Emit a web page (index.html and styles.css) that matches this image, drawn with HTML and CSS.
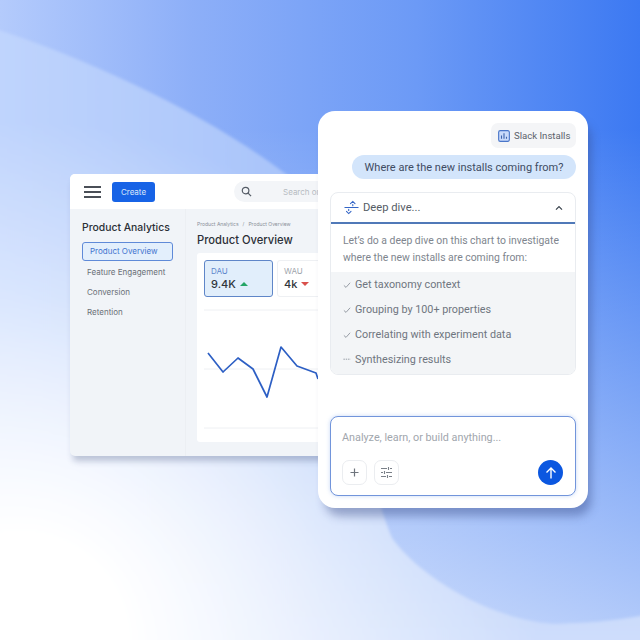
FILE: index.html
```html
<!DOCTYPE html>
<html lang="en">
<head>
    <meta charset="UTF-8">
    <title>Product Analytics</title>
    <link rel="stylesheet" href="styles.css">
</head>
<body>
<div class="stage">
    <svg class="backdrop" width="640" height="640" viewBox="0 0 640 640">
        <defs>
            <linearGradient id="sky" x1="0" y1="0" x2="1" y2="0">
                <stop offset="0" stop-color="#b4cbfc"/>
                <stop offset="0.3" stop-color="#8dafF8"/>
                <stop offset="0.65" stop-color="#6c9af6"/>
                <stop offset="1" stop-color="#3c79f2"/>
            </linearGradient>
            <linearGradient id="fade" x1="0" y1="0" x2="0" y2="1">
                <stop offset="0.2" stop-color="#ffffff" stop-opacity="0"/>
                <stop offset="1" stop-color="#ffffff" stop-opacity="0.62"/>
            </linearGradient>
            <linearGradient id="wave" gradientUnits="userSpaceOnUse" x1="0" y1="0" x2="320" y2="0">
                <stop offset="0" stop-color="#bfd4fd"/>
                <stop offset="1" stop-color="#a6c2f9"/>
            </linearGradient>
            <linearGradient id="lift" gradientUnits="userSpaceOnUse" x1="0" y1="300" x2="0" y2="640">
                <stop offset="0" stop-color="#ffffff" stop-opacity="0"/>
                <stop offset="1" stop-color="#ffffff" stop-opacity="0.45"/>
            </linearGradient>
            <radialGradient id="glow" gradientUnits="userSpaceOnUse" cx="20" cy="640" r="520">
                <stop offset="0.2" stop-color="#ffffff"/>
                <stop offset="1" stop-color="#ffffff" stop-opacity="0"/>
            </radialGradient>
            <filter id="soft"><feGaussianBlur stdDeviation="1.5"/></filter>
            <path id="lightpart" d="M-20 24C90 58 220 120 300 185C360 250 350 440 392 538C430 590 520 630 571 623C600 622 620 620 660 612V660H-20Z"/>
        </defs>
        <rect width="640" height="640" fill="url(#sky)"/>
        <rect width="640" height="640" fill="url(#fade)"/>
        <g filter="url(#soft)">
            <use href="#lightpart" fill="url(#wave)"/>
            <use href="#lightpart" fill="url(#lift)"/>
            <use href="#lightpart" fill="url(#glow)"/>
        </g>
    </svg>

    <!-- dashboard window, goes behind the chat panel -->
    <section class="dash">
        <header class="dash-top">
            <span class="burger"><i></i><i></i><i></i></span>
            <button class="create-btn">Create</button>
            <div class="search">
                <svg width="11" height="11" viewBox="0 0 12 12" fill="none" stroke="#555c66" stroke-width="1.3"><circle cx="5" cy="5" r="3.6"/><path d="M7.7 7.7L11 11"/></svg>
                <span>Search or</span>
            </div>
        </header>
        <div class="dash-body">
            <aside class="side">
                <h3>Product Analytics</h3>
                <a class="side-link active">Product Overview</a>
                <a class="side-link">Feature Engagement</a>
                <a class="side-link">Conversion</a>
                <a class="side-link">Retention</a>
            </aside>
            <main class="content">
                <div class="crumbs"><span>Product Analytics</span><span>/</span><span>Product Overview</span></div>
                <h2>Product Overview</h2>
                <div class="chart-card">
                    <div class="metrics">
                        <div class="metric selected">
                            <label>DAU</label>
                            <div class="val">9.4K <b class="tri up"></b></div>
                        </div>
                        <div class="metric">
                            <label>WAU</label>
                            <div class="val">4k <b class="tri down"></b></div>
                        </div>
                    </div>
                    <svg class="chart" width="150" height="132" viewBox="0 0 150 132" fill="none">
                        <path d="M0 2H150M0 61H150M0 120H150" stroke="#eef0f3" stroke-width="1"/>
                        <path d="M4 45L19 64L34 50L49 61L63 89L77 39L93 58L112 65L114 71" stroke="#2d5fc4" stroke-width="1.7" stroke-linejoin="round"/>
                    </svg>
                </div>
            </main>
        </div>
    </section>

    <!-- chat panel -->
    <section class="chat">
        <div class="chat-scroll">
            <div class="chip">
                <svg width="12" height="12" viewBox="0 0 13 13" fill="none"><rect x="0.7" y="0.7" width="11.6" height="11.6" rx="1.8" fill="#c9dafa" stroke="#4a76c9" stroke-width="1.2"/><path d="M3.8 9.4V6M6.5 9.4V3.6M9.2 9.4V7.4" stroke="#3d64ad" stroke-width="1.2"/></svg>
                <span>Slack Installs</span>
            </div>
            <div class="bubble">Where are the new installs coming from?</div>
            <div class="dive">
                <div class="dive-head">
                    <svg width="15" height="15" viewBox="0 0 15 15" fill="none" stroke="#3566c6" stroke-width="1.1"><path d="M0.5 7.5H14.5"/><path d="M6.5 3.6L8.8 1.4L11 3.6M8.8 4.5V5.8M2.5 11.4L4.7 13.6L7 11.4M4.7 9.2V10.5" stroke-linecap="round"/></svg>
                    <span class="dive-title">Deep dive...</span>
                    <svg class="caret" width="8" height="6" viewBox="0 0 8 6" fill="none" stroke="#3d4650" stroke-width="1.3"><path d="M1 4.6L4 1.6L7 4.6"/></svg>
                </div>
                <p class="dive-text">Let’s do a deep dive on this chart to investigate<br>where the new installs are coming from:</p>
                <ul class="steps">
                    <li><svg width="8" height="8" viewBox="0 0 9 9" fill="none" stroke="#8b929b" stroke-width="1"><path d="M1 5L3.4 7.2L8 2"/></svg>Get taxonomy context</li>
                    <li><svg width="8" height="8" viewBox="0 0 9 9" fill="none" stroke="#8b929b" stroke-width="1"><path d="M1 5L3.4 7.2L8 2"/></svg>Grouping by 100+ properties</li>
                    <li><svg width="8" height="8" viewBox="0 0 9 9" fill="none" stroke="#8b929b" stroke-width="1"><path d="M1 5L3.4 7.2L8 2"/></svg>Correlating with experiment data</li>
                    <li><svg width="8" height="8" viewBox="0 0 9 9" fill="none" stroke="#8b929b" stroke-width="1" stroke-dasharray="1.6 1"><path d="M0.5 3.6H8.5"/></svg>Synthesizing results</li>
                </ul>
            </div>
        </div>
        <div class="composer">
            <div class="placeholder">Analyze, learn, or build anything...</div>
            <div class="composer-row">
                <button class="tool-btn"><svg width="11" height="11" viewBox="0 0 11 11" fill="none" stroke="#6f757d" stroke-width="1.2"><path d="M5.5 1.5V9.5M1.5 5.5H9.5"/></svg></button>
                <button class="tool-btn"><svg width="13" height="13" viewBox="0 0 13 13" fill="none" stroke="#7a8088" stroke-width="1.1"><path d="M1 2.5H7M10 2.5H12M1 6.5H3M6 6.5H12M1 10.5H6M9 10.5H12M8.5 1V4M4.5 5V8M7.5 9V12"/></svg></button>
                <button class="send-btn"><svg width="14" height="14" viewBox="0 0 14 14" fill="none" stroke="#fff" stroke-width="1.4"><path d="M7 12.5V2M2.5 6.5L7 2L11.5 6.5"/></svg></button>
            </div>
        </div>
    </section>
</div>
</body>
</html>
```

FILE: styles.css
```css
* {
    box-sizing: border-box;
}
body {
    margin: 0;
    font-family: Inter, "Liberation Sans", sans-serif;
}
.stage {
    position: relative;
    width: 640px;
    height: 640px;
    overflow: hidden;
}
.backdrop {
    position: absolute;
    left: 0;
    top: 0;
}

/* dashboard window */
.dash {
    position: absolute;
    left: 70px;
    top: 174px;
    width: 290px;
    height: 282px;
    display: flex;
    flex-direction: column;
    background: #f1f4f8;
    border-radius: 5px;
    box-shadow: 2px 6px 6px -1px rgba(60, 75, 120, 0.3);
    overflow: hidden;
}
.dash-top {
    height: 35px;
    flex-shrink: 0;
    display: flex;
    align-items: center;
    background: #fff;
    padding-left: 14px;
}
.burger {
    display: flex;
    flex-direction: column;
    gap: 3px;
    width: 17px;
}
.burger i {
    display: block;
    height: 2px;
    background: #4a4f57;
}
.create-btn {
    margin-left: 11px;
    width: 43px;
    height: 20px;
    padding: 0;
    border: none;
    border-radius: 3px;
    background: #1763e6;
    color: #dbe7fb;
    font: 8px Inter, sans-serif;
}
.search {
    margin-left: 79px;
    width: 110px;
    height: 21px;
    display: flex;
    align-items: center;
    gap: 31px;
    padding-left: 7px;
    border-radius: 11px;
    background: #f3f5f8;
    color: #b6bbc2;
    font-size: 8px;
    white-space: nowrap;
}
.dash-body {
    flex: 1;
    display: flex;
}
.side {
    width: 116px;
    padding: 12px 12px 0 12px;
    border-right: 1px solid #eceff3;
}
.side h3 {
    margin: 0 0 8px;
    font-size: 10.4px;
    font-weight: 500;
    color: #2b2f36;
    white-space: nowrap;
}
.side-link {
    display: block;
    height: 18px;
    margin-bottom: 2px;
    padding-left: 5px;
    line-height: 18px;
    font-size: 8px;
    color: #6a7077;
    white-space: nowrap;
}
.side-link.active {
    height: 19px;
    padding-left: 7px;
    margin-bottom: 2px;
    border: 1px solid #5f8ad8;
    border-radius: 3px;
    background: #e3effc;
    color: #3f73cf;
    line-height: 17px;
}
.content {
    flex: 1;
    padding: 12px 0 15px 11px;
    overflow: hidden;
}
.crumbs {
    display: flex;
    gap: 4px;
    font-size: 5px;
    color: #8a9098;
    white-space: nowrap;
}
.content h2 {
    margin: 6px 0 6px;
    font-size: 11.2px;
    font-weight: 500;
    color: #2b2f36;
    white-space: nowrap;
}
.chart-card {
    height: 189px;
    padding: 7px 0 0 7px;
    background: #fff;
    border-radius: 3px 0 0 3px;
}
.metrics {
    display: flex;
    gap: 4px;
}
.metric {
    width: 69px;
    height: 37px;
    padding: 5px 6px;
    border: 1px solid #eef0f3;
    border-radius: 3px;
    background: #fff;
}
.metric.selected {
    border-color: #5f86c8;
    background: #e1eefb;
}
.metric label {
    display: block;
    font-size: 8px;
    line-height: 10px;
    color: #a0a5ac;
}
.metric.selected label {
    color: #5d86cc;
}
.val {
    display: flex;
    align-items: center;
    gap: 4px;
    font-size: 11px;
    font-weight: 500;
    line-height: 16px;
    color: #30353c;
}
.tri {
    width: 0;
    height: 0;
    border-left: 4px solid transparent;
    border-right: 4px solid transparent;
}
.tri.up {
    border-bottom: 4px solid #25a566;
}
.tri.down {
    border-top: 4px solid #d9504c;
}
.chart {
    display: block;
    margin-top: 11px;
}

/* chat panel */
.chat {
    position: absolute;
    left: 318px;
    top: 111px;
    width: 270px;
    height: 397px;
    display: flex;
    flex-direction: column;
    justify-content: space-between;
    padding: 12px;
    background: #fff;
    border-radius: 17px;
    box-shadow: 5px 10px 10px -2px rgba(50, 70, 130, 0.42);
    font-family: Roboto, sans-serif;
}
.chat-scroll {
    display: flex;
    flex-direction: column;
    align-items: flex-end;
}
.chip {
    height: 25px;
    width: 85px;
    display: flex;
    align-items: center;
    gap: 4px;
    padding-left: 7px;
    border-radius: 7px;
    background: #f4f5f7;
    font-size: 9.6px;
    color: #5b626b;
    white-space: nowrap;
}
.bubble {
    margin-top: 7px;
    width: 224px;
    height: 24px;
    border-radius: 12px;
    background: #d3e5fb;
    text-align: center;
    font-size: 11px;
    line-height: 25px;
    color: #3f4c63;
    white-space: nowrap;
}
.dive {
    margin-top: 13px;
    width: 100%;
    border: 1px solid #e9ecf0;
    border-radius: 8px;
    overflow: hidden;
}
.dive-head {
    height: 31px;
    display: flex;
    align-items: center;
    gap: 4px;
    padding: 0 12px 0 13px;
    border-bottom: 2px solid #5079b8;
}
.dive-title {
    flex: 1;
    font-size: 11.2px;
    color: #555c66;
}
.dive-text {
    margin: 0;
    height: 48px;
    padding: 8px 0 0 12px;
    font-size: 10.4px;
    line-height: 17px;
    color: #7e858e;
    white-space: nowrap;
}
.steps {
    margin: 0;
    padding: 0 12px 2px;
    list-style: none;
    background: #f3f5f7;
}
.steps li {
    height: 25px;
    display: flex;
    align-items: center;
    gap: 4px;
    font-size: 10.8px;
    color: #6f767f;
}
.composer {
    height: 80px;
    padding: 13px 11px 0;
    border: 1.5px solid #7295db;
    border-radius: 8px;
    background: #fff;
    box-shadow: 0 0 4px rgba(120, 160, 235, 0.4);
}
.placeholder {
    height: 16px;
    font-size: 10.8px;
    line-height: 16px;
    color: #a1a6ad;
}
.composer-row {
    margin-top: 14px;
    display: flex;
    align-items: center;
    gap: 7px;
}
.tool-btn {
    width: 25px;
    height: 25px;
    padding: 0;
    display: flex;
    align-items: center;
    justify-content: center;
    border: 1px solid #ebedf0;
    border-radius: 7px;
    background: #fff;
}
.send-btn {
    margin-left: auto;
    margin-right: 1px;
    width: 25px;
    height: 25px;
    padding: 0;
    display: flex;
    align-items: center;
    justify-content: center;
    border: none;
    border-radius: 50%;
    background: #0b57e0;
}
```
